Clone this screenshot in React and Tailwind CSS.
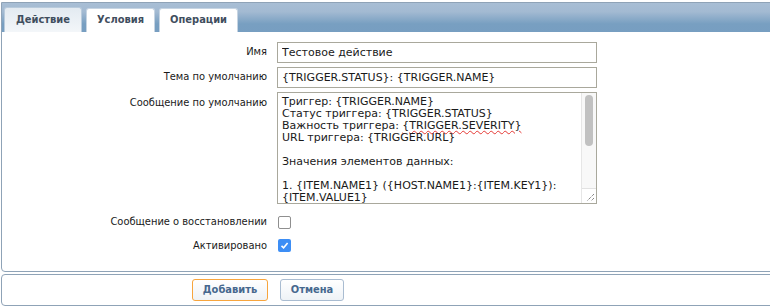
import React from "react";

const lines = [
  "Триггер: {TRIGGER.NAME}",
  "Статус триггера: {TRIGGER.STATUS}",
  "Важность триггера: {TRIGGER.SEVERITY}",
  "URL триггера: {TRIGGER.URL}",
  "",
  "Значения элементов данных:",
  "",
  "1. {ITEM.NAME1} ({HOST.NAME1}:{ITEM.KEY1}):",
  "{ITEM.VALUE1}",
  "",
];

function Line({ text }) {
  if (text.includes("{TRIGGER.SEVERITY}")) {
    const [a] = text.split("{TRIGGER.SEVERITY}");
    return (
      <div className="h-[12px] whitespace-pre">
        {a}
        <span className="underline decoration-wavy decoration-[#e53935] decoration-1 underline-offset-[1px]">
          {"{TRIGGER.SEVERITY}"}
        </span>
      </div>
    );
  }
  return <div className="h-[12px] whitespace-pre">{text || " "}</div>;
}

const cond = "font-['DejaVu_Sans_Condensed','DejaVu_Sans',sans-serif] [font-stretch:condensed]";

export default function App() {
  return (
    <div className="w-[770px] h-[307px] overflow-hidden bg-white font-['DejaVu_Sans',sans-serif] text-[11px] text-[#1a1a1a]">
      <div className="mt-[2px] ml-px w-[790px] border border-[#8fa3b7] rounded-b-[4px] h-[270px] flex flex-col">
        <div className={`h-[29px] shrink-0 bg-[linear-gradient(#a8bed5,#a3bad2_30%,#789fc1_72%,#779ec1)] flex items-end pl-[2px] gap-[4px] ${cond}`}>
          <div className="h-[25px] px-[11px] flex items-center rounded-t-[3px] border border-b-0 border-[#b9cbdc] bg-[linear-gradient(#e3eaf1,#f3f6f9)] font-bold text-[#3f4e5e]">
            Действие
          </div>
          <div className="h-[24px] px-[10px] flex items-center rounded-t-[3px] border border-b-0 border-[#c6d4e2] bg-white font-bold text-[#3f4e5e]">
            Условия
          </div>
          <div className="h-[24px] px-[10px] flex items-center rounded-t-[3px] border border-b-0 border-[#c6d4e2] bg-white font-bold text-[#3f4e5e]">
            Операции
          </div>
        </div>
        <div className="grid grid-cols-[265px_320px] gap-x-[10px] pt-[10px] items-center">
          <div className={`text-right ${cond}`}>Имя</div>
          <input
            className="h-[21px] border border-[#a9a89c] px-[4px] outline-none text-[11px] text-[#1a1a1a]"
            defaultValue="Тестовое действие"
          />
          <div className={`text-right mt-[4px] ${cond}`}>Тема по умолчанию</div>
          <input
            className="h-[21px] mt-[4px] border border-[#a9a89c] px-[4px] outline-none text-[11px] text-[#1a1a1a]"
            defaultValue="{TRIGGER.STATUS}: {TRIGGER.NAME}"
          />
          <div className={`text-right self-start mt-[7px] ${cond}`}>Сообщение по умолчанию</div>
          <div className="mt-[4px] h-[112px] border border-[#a9a89c] flex overflow-hidden">
            <div className="flex-1 pl-[4px] pt-[3px] overflow-hidden leading-[12px]">
              {lines.map((t, i) => (
                <Line key={i} text={t} />
              ))}
            </div>
            <div className="w-[15px] shrink-0 flex flex-col bg-[#f8f8f8] border-l border-[#e6e6e6]">
              <div className="flex-1 pt-[2px] flex justify-center">
                <div className="w-[8px] h-[51px] rounded-full bg-[#c1c1c1]" />
              </div>
              <div className="h-[15px] border-t border-[#e2e2e2] bg-white flex items-end justify-end">
                <svg width="9" height="9" viewBox="0 0 9 9" className="mb-[1px] mr-[1px]">
                  <line x1="8" y1="1" x2="1" y2="8" stroke="#555" strokeWidth="1" strokeDasharray="1 1" />
                  <line x1="8" y1="5" x2="5" y2="8" stroke="#555" strokeWidth="1" strokeDasharray="1 1" />
                </svg>
              </div>
            </div>
          </div>
          <div className={`text-right mt-[10px] ${cond}`}>Сообщение о восстановлении</div>
          <div className="mt-[10px] h-[13px] flex items-center pl-px">
            <div className="w-[13px] h-[13px] border border-[#8f8f8f] rounded-[2px] bg-white" />
          </div>
          <div className={`text-right mt-[7px] ${cond}`}>Активировано</div>
          <div className="mt-[7px] h-[13px] flex items-center pl-px">
            <div className="w-[13px] h-[13px] rounded-[2px] bg-[#3d8ef5] flex items-center justify-center">
              <svg width="9" height="9" viewBox="0 0 9 9">
                <path d="M1.5 4.8 L3.6 6.8 L7.6 2" fill="none" stroke="#fff" strokeWidth="1.6" />
              </svg>
            </div>
          </div>
        </div>
      </div>
      <div className={`mt-[2px] ml-px w-[790px] h-[32px] border border-[#8fa3b7] rounded-[4px] flex items-center pl-[190px] gap-[12px] ${cond}`}>
        <button className="w-[76px] h-[22px] rounded-[3px] border border-[#f7a53e] bg-[linear-gradient(#ffffff,#eef2f6)] font-bold text-[#46688e] text-[11px]">
          Добавить
        </button>
        <button className="w-[64px] h-[22px] rounded-[3px] border border-[#a9bcd1] bg-[linear-gradient(#ffffff,#eef2f6)] font-bold text-[#46688e] text-[11px]">
          Отмена
        </button>
      </div>
    </div>
  );
}
